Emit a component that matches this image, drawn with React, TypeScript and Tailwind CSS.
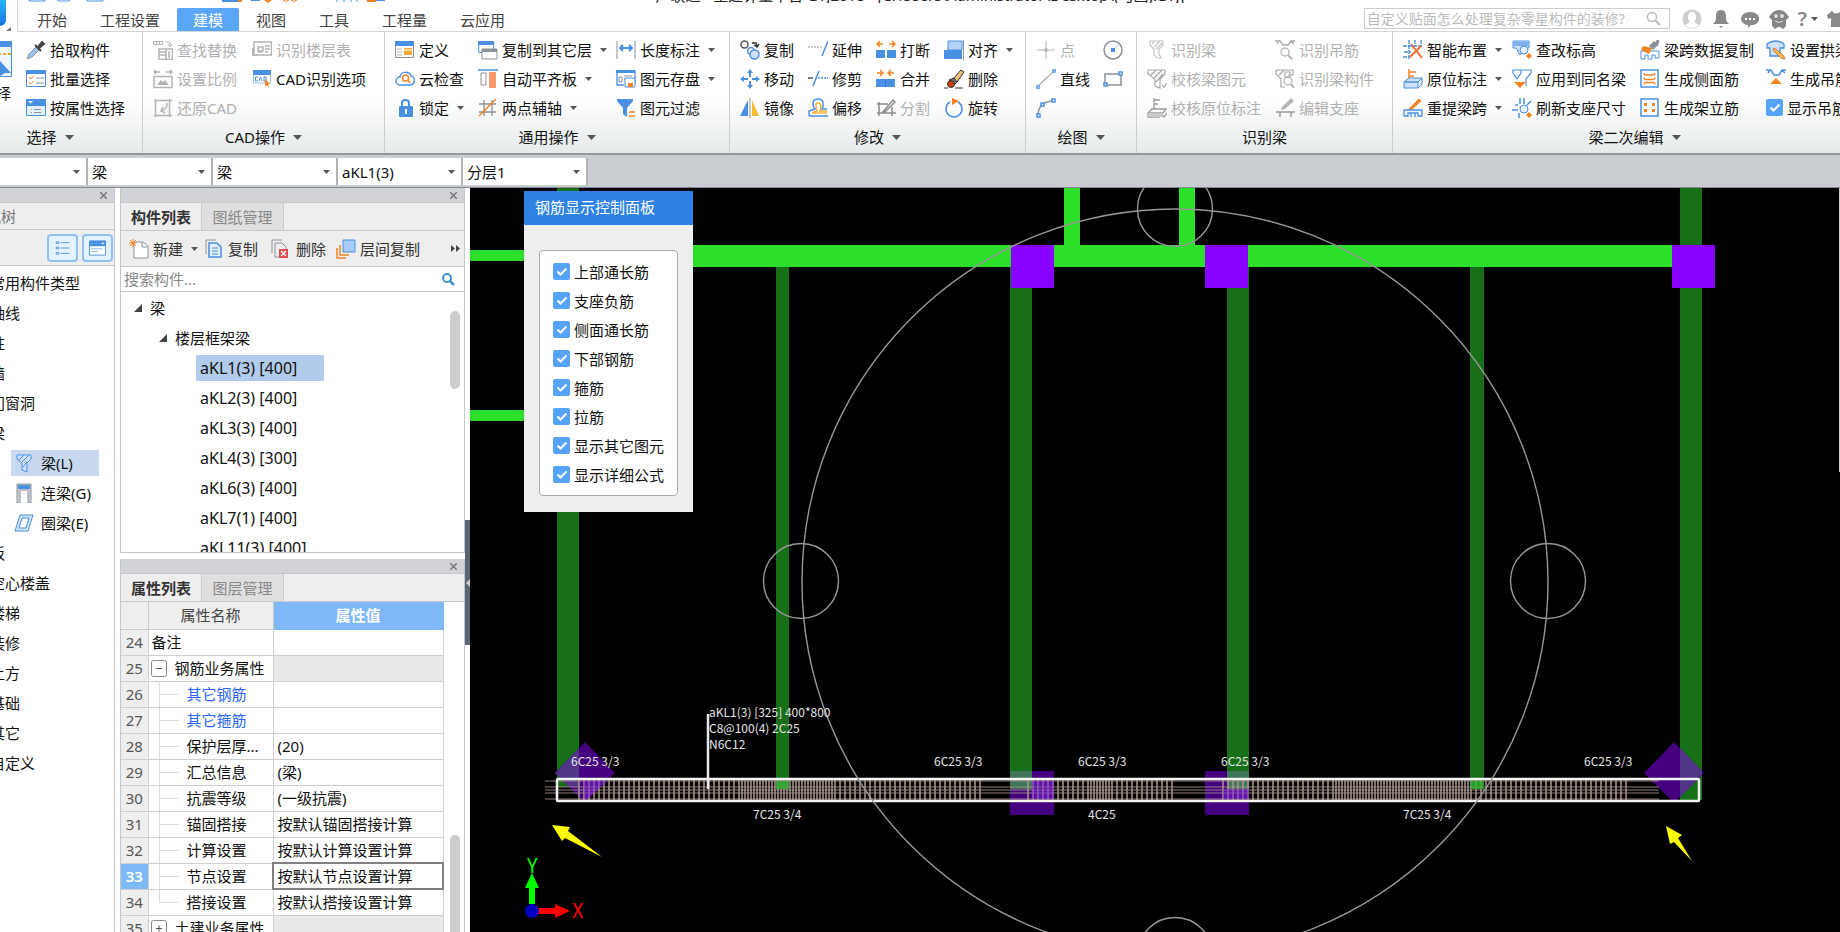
import { useState } from "react";
import type { ReactNode } from "react";
import clsx from "clsx";

const B = "#4a90e2";
const L = "#cfe2fa";
const O = "#f58220";
const G = "#8b9299";
const D = "#b4b4b4";

// 20x20 ribbon and toolbar glyphs
const ICONS: Record<string, ReactNode> = {
  pick: (
    <>
      <path d="M1 19l2-5 7-7 3 3-7 7z" fill="#9cc4ea" stroke={G} />
      <path d="M9 5l6 6M12 7l4-5 2 2-5 4z" stroke="#444" strokeWidth="2" fill="#555" />
    </>
  ),
  batch: (
    <>
      <path d="M.5 2.500h19v15h-19z" fill="#fff" stroke={B} />
      <path d="M0 1h20v4H0z" fill={B} />
      <path d="M3 8l1.500 2L8 7M3 13l1.500 2L8 12" stroke={O} />
      <path d="M10 9h8M10 14h8" stroke={G} />
    </>
  ),
  attr: (
    <>
      <path d="M.5 2.500h19v15h-19z" fill="#e3effc" stroke={B} />
      <path d="M0 1h20v7H0z" fill={B} />
      <path d="M2 3h5L4.500 5.500z" fill="#fff" />
      <path d="M5 11.500h1M8 11.500h7M5 14.500h1M8 14.500h7" stroke={G} />
    </>
  ),
  findReplace: (
    <>
      <path d="M.5 1.500h9v3h-9zM3.500 1v3M6.500 1v3M12 2h5v3M15 4l2 3 2-3" stroke={D} />
      <path d="M6 9h13.500v10.500H6zM6 12h7M6 15h7M13 9v10M16 11v7" stroke={D} strokeWidth="1.500" />
    </>
  ),
  ratio: (
    <>
      <path d="M1 3h6M3 1L1 3l2 2M13 3h6M17 1l2 2-2 2M1 7.500h18v11H1z" stroke={D} strokeWidth="1.500" />
      <path d="M4 16l4-5 2 2 2-2 4 5z" fill={D} />
    </>
  ),
  restore: (
    <path d="M1 2.500h18M2.500 1v18M1 17.500h18M16.500 1v18M14 5v2c0 3-2 4-5 6M10 9l-2 4 4 2" stroke={D} strokeWidth="1.500" />
  ),
  floorTable: (
    <>
      <path d="M2 2h17.500v13H2zM6 7h5v4H6zM13 6h5M13 9h5M13 12h3M6 12h4" stroke={D} strokeWidth="1.500" />
      <path d="M1 8v7h4" stroke={D} strokeWidth="2" />
    </>
  ),
  cadOption: (
    <>
      <path d="M1.500 2h17v12h-17z" fill="#fff" stroke="#9cc4ea" />
      <path d="M1 1h18v5H1z" fill={B} />
      <path d="M6 8H3.500v4H6M7 12l1.500-4L10 12M12 8v4h2V8z" stroke={B} />
      <path d="M13 10l5 5-2 .5 1 3-2-2-2 1z" fill={O} />
    </>
  ),
  define: (
    <>
      <path d="M.5 1.500h18v16H.5z" fill="#fff" stroke={G} />
      <path d="M0 1h19v5H0z" fill={B} />
      <path d="M9 8h8v7H9z" fill="#f7a833" />
      <path d="M9 10h8" stroke="#fff" />
      <path d="M2 9h5M2 12h5M2 15h5" stroke={D} />
    </>
  ),
  cloud: (
    <>
      <path d="M5 16a4 4 0 0 1 0-8c1-6 9-6 11-1 5 1 4 8 0 9z" stroke={B} strokeWidth="1.500" fill="#fff" />
      <circle cx="10.500" cy="9" r="3" stroke={O} strokeWidth="1.500" />
      <path d="M13 11l2 3" stroke={O} strokeWidth="1.500" />
    </>
  ),
  lock: (
    <>
      <path d="M7 8V5c0-4 7-4 7 0v3" stroke={B} strokeWidth="2" />
      <rect x="4" y="8" width="14" height="11" rx="1" fill={B} />
      <path d="M11 11v5" stroke="#fff" strokeWidth="2" />
    </>
  ),
  copyFloor: (
    <>
      <path d="M.7 1.500h15v11h-15z" stroke={B} fill="#fff" />
      <path d="M0 1h16v4H0z" fill={B} />
      <path d="M4 9h15v10H4z" stroke={G} fill="#fff" />
      <path d="M4 9h15v3H4z" fill={G} />
    </>
  ),
  alignSlab: (
    <>
      <path d="M0 1h20" stroke={B} strokeWidth="1.500" />
      <path d="M3 4h5v12H3z" stroke={G} fill="#fff" />
      <path d="M11 3h7v16h-7z" fill="#fb9b6e" />
    </>
  ),
  twoPoint: (
    <>
      <path d="M6 2v16M14 2v16M1 6h17M1 14h17" stroke={G} strokeWidth="1.300" />
      <path d="M1 18L18 1" stroke={O} strokeWidth="1.500" />
    </>
  ),
  lengthDim: (
    <>
      <path d="M1 1v18M19 1v18" stroke={G} />
      <path d="M4 8h12M7 5L4 8l3 3M13 5l3 3-3 3" stroke={B} strokeWidth="2" />
    </>
  ),
  saveEl: (
    <>
      <path d="M1 2h18v12M1 2v14h7" stroke={B} strokeWidth="1.300" />
      <path d="M0 1h19v3H0z" fill={B} />
      <path d="M3 8h3v5H3zM8 7h8M8 10h2" stroke={G} />
      <path d="M9 9h10v9H9z" stroke={B} fill="#fff" />
      <path d="M12 14h5v4h-5z" fill={O} />
    </>
  ),
  filter: (
    <>
      <path d="M1 1h16v2l-6 7v9l-4-3v-6L1 3z" fill={B} />
      <path d="M13 14h6M13 18h6" stroke={O} strokeWidth="1.500" />
    </>
  ),
  copy: (
    <>
      <circle cx="4.500" cy="4.500" r="3.500" stroke="#555" strokeWidth="1.500" />
      <path d="M12 3h4l1 4M14 5l3 2 2-3" stroke="#333" strokeWidth="1.500" />
      <circle cx="11" cy="11" r="3.500" stroke={B} strokeWidth="1.500" />
      <circle cx="14.500" cy="14.500" r="4.500" stroke={B} fill={L} strokeWidth="1.500" />
    </>
  ),
  move: (
    <path
      d="M10 0l3 4h-2v4H9V4H7zM10 20l-3-4h2v-4h2v4h2zM0 10l4-3v2h4v2H4v2zM20 10l-4 3v-2h-4V9h4V7z"
      fill={B}
    />
  ),
  mirror: (
    <>
      <path d="M8 2v16H0z" fill={B} />
      <path d="M12 2v16h7z" fill="#f9b934" />
      <path d="M10 0v20" stroke={G} />
    </>
  ),
  extend: (
    <>
      <path d="M0 7h14" stroke={G} strokeDasharray="2 1" />
      <path d="M20 1l-6 15" stroke={B} strokeWidth="1.500" />
    </>
  ),
  trim: (
    <>
      <path d="M0 9h5" stroke="#555" strokeWidth="1.500" />
      <path d="M11 2L5 17" stroke={B} strokeWidth="1.500" />
      <path d="M10 9h10" stroke={B} strokeDasharray="2 1" strokeWidth="1.500" />
    </>
  ),
  offset: (
    <>
      <path d="M1 18v-5l6-2c-3-4-3-10 3-10s6 6 4 10h5M1 18h19" fill="#fff" stroke={B} strokeWidth="1.500" />
      <path d="M4 15l5-2c-1-5-2-8 1-8 4 0 3 4 2 8h7M4 15h15" stroke="#f2b63d" strokeWidth="1.500" />
    </>
  ),
  breakEl: (
    <>
      <path d="M0 10h9v8H0zM11 10h9v8h-9z" fill={B} />
      <path d="M1 4h6M4 1L1 4l3 3M13 4h6M16 1l3 3-3 3" stroke={O} strokeWidth="1.500" />
    </>
  ),
  merge: (
    <>
      <path d="M0 10h19v8H0z" fill={B} />
      <path d="M9.500 10v8" stroke="#2f73c4" />
      <path d="M1 4h6M4 1l3 3-3 3M12 4h6M15 1l-3 3 3 3" stroke={O} strokeWidth="1.500" />
    </>
  ),
  split: (
    <path d="M1 6h11M1 15h19M3 4v14M16 9v9M7 14l10-12 2 2L9 14z" stroke="#8c8c8c" strokeWidth="1.500" />
  ),
  align: (
    <>
      <path d="M4 1h14v9H4z" fill="#b5d2f7" stroke={B} />
      <path d="M0 10h18v9H0z" fill={B} />
      <path d="M19.500 0v20" stroke={G} />
    </>
  ),
  erase: (
    <>
      <path d="M9 10l8-9 3 2-7 10z" fill="#e8c27a" stroke="#333" />
      <path d="M5 11l5-2 3 4-3 3z" fill="#777" stroke="#333" />
      <circle cx="7" cy="15" r="3.500" fill="#c2410c" stroke="#333" />
      <path d="M0 19h4M11 19h8" stroke="#333" />
    </>
  ),
  rotate: (
    <>
      <path d="M6 4a8 8 0 1 0 8 0" stroke={B} strokeWidth="1.500" />
      <path d="M8 0l7 3-7 4z" fill={O} />
    </>
  ),
  point: (
    <>
      <path d="M10 1v18M1 10h18" stroke={D} />
      <circle cx="10" cy="10" r="2" fill={D} />
    </>
  ),
  line: (
    <>
      <path d="M2 17L18 2" stroke={D} strokeWidth="1.500" />
      <path d="M0 16h4v4H0zM16 0h4v4h-4z" fill="#7fb0ee" />
    </>
  ),
  arc: (
    <>
      <path d="M2 18C2 8 8 3 18 3" stroke={G} strokeWidth="1.500" />
      <path d="M1 16h3v3H1zM5 5h3v3H5zM16 1h3v3h-3z" fill="#fff" stroke={B} strokeWidth="1.500" />
    </>
  ),
  circle: (
    <>
      <circle cx="10" cy="10" r="9" stroke={G} strokeWidth="1.500" />
      <path d="M10 10l5-5" stroke="#9cc4ea" />
      <path d="M8 8h4v4H8z" fill={B} />
    </>
  ),
  rect: (
    <>
      <path d="M2 5h16v11H2z" stroke={G} strokeWidth="1.500" />
      <path d="M1 14h3v3H1zM16 3h3v3h-3z" fill="#fff" stroke={B} strokeWidth="1.500" />
    </>
  ),
  recBeam: (
    <path d="M3 1h13v4l-4 4v5l2 4h-4l-3-3V9L3 5zM5 4l3-3M7 7l6-6M9 9l6-6" stroke="#c4c4c4" strokeWidth="1.200" />
  ),
  checkBeam: (
    <path d="M1 1h17v4l-5 5v9l-5-2v-7L1 5zM4 6l5-5M7 9l8-8M9 13l7-8M15 16l2 2 3-4" stroke="#a8a8a8" strokeWidth="1.200" />
  ),
  checkNote: (
    <>
      <path d="M7 0v11M7 2h6M7 6h4M1 15l4-4h14l-3 4zM1 15v4h12M15 17l2 2 3-4" stroke="#9c9c9c" strokeWidth="1.300" />
      <path d="M1 15h14v4H1z" fill="#c9c9c9" />
    </>
  ),
  recHanger: (
    <>
      <path d="M0 1h5l3 4h5l3-4h4M4 1l-2 3M16 1l3 3" stroke="#a8a8a8" strokeWidth="1.300" />
      <circle cx="10" cy="12" r="4" stroke="#b4b4b4" strokeWidth="1.300" />
      <path d="M13 15l4 4" stroke="#b4b4b4" strokeWidth="2" />
    </>
  ),
  recPart: (
    <>
      <path d="M1 1h17v5h-5M1 1v4l5 5v8h4M4 6l5-5M10 3h5v5h-5z" stroke="#a8a8a8" strokeWidth="1.200" />
      <circle cx="13" cy="12" r="4" stroke="#b4b4b4" strokeWidth="1.300" />
      <path d="M16 15l3 4" stroke="#b4b4b4" strokeWidth="2" />
    </>
  ),
  editSupport: (
    <>
      <path d="M7 9l9-9 3 3-9 8-4 1z" fill={D} />
      <path d="M1 14h19M5 14v5M16 14v5" stroke="#9c9c9c" strokeWidth="1.500" />
    </>
  ),
  smart: (
    <>
      <path d="M6 0v19M12 0v6M18 0v7M0 6h19M1 12h7M0 17h6" stroke={B} strokeWidth="1.300" strokeDasharray="4 1" />
      <path d="M8 4l11 14M18 6L7 17" stroke="#ee6c2d" strokeWidth="2" />
    </>
  ),
  note: (
    <>
      <path d="M6 12V0M6 3h7M6 7h5" stroke={O} strokeWidth="1.500" />
      <path d="M1 13l5-4h13l-4 4zM1 13h14v6H1zM15 19l4-4V9" fill={L} stroke={B} />
    </>
  ),
  respan: (
    <>
      <path d="M7 10l9-9 2 2-9 8-3 1z" fill={O} stroke={O} />
      <path d="M1 12h18v6h-4v-3H5v3H1zM8 15v4M12 15v4" stroke={B} strokeWidth="1.300" />
    </>
  ),
  elevation: (
    <>
      <path d="M1 1h16v7H12L8 15l-4-7H1z" fill={L} stroke={B} />
      <path d="M1 2h16v4H1z" fill="#7fb0ee" />
      <circle cx="12" cy="10" r="4" fill="#e8f1fd" stroke={B} />
      <path d="M14 16l3-3 3 3-3 3z" fill={O} />
    </>
  ),
  applyName: (
    <>
      <path d="M1 1h8v3l-4 6L1 4zM9 1h10v3l-5 6v7" stroke={B} strokeWidth="1.200" fill="#fff" />
      <path d="M2 13h12l-6 6z" fill={O} />
    </>
  ),
  refresh: (
    <>
      <path d="M8 0v6M12 0v6M0 12h6M3 7h3M15 7l4-4M7 15v5" stroke={B} strokeWidth="1.500" />
      <circle cx="12" cy="11" r="4" fill="#e8f1fd" stroke={B} />
      <path d="M14 17l3-3 3 3-3 3z" fill={O} />
    </>
  ),
  spanCopy: (
    <>
      <path d="M1 11h18v7h-4v-3h-3v4H8v-4H5v4H1z" fill="#fff" stroke={B} />
      <path d="M3 6l9 2-3 6-8-4z" fill={O} />
      <path d="M10 7l4-4 3 1 1-4M12 9l5-5" stroke={G} strokeWidth="3" />
    </>
  ),
  sideBar: (
    <>
      <path d="M1 1h17v17H1z" stroke={B} strokeWidth="1.500" />
      <path d="M4 4q0 2 2 2h7q2 0 2-2M4 8.500q0 2 2 2h7q2 0 2-2M4 15.500q0-2 2-2h7q2 0 2 2" stroke={O} strokeWidth="1.300" />
    </>
  ),
  erectBar: (
    <>
      <path d="M1 1h17v17H1z" stroke={B} strokeWidth="1.500" />
      <path d="M4 5h3v3H4zM12 5h3v3h-3zM4 11h3v3H4zM12 11h3v3h-3z" fill={O} />
    </>
  ),
  archBeam: (
    <>
      <path d="M1 4c5-4 12-4 17 0v4h-4v8H4V8H1z" fill={L} stroke={B} strokeWidth="1.300" />
      <path d="M8 8l9 7 2 4-4-1-8-8z" fill="#f9b87b" stroke="#d97706" />
    </>
  ),
  hanger: (
    <>
      <path d="M0 1h5l3 5h5l3-5h4M4 1L2 4M16 1l3 3" stroke={B} strokeWidth="1.500" />
      <path d="M10 9l6 6H4z" fill={O} />
    </>
  ),
  newItem: (
    <>
      <path d="M5 3h9l5 4v12H5z" stroke={G} fill="#fff" />
      <path d="M13 3v5h5" stroke={G} />
      <path d="M4 0v8M0 4h8M1 1l6 6M7 1L1 7" stroke={O} />
    </>
  ),
  dup: (
    <>
      <path d="M2 15V1h10" stroke={G} />
      <path d="M5 4h8l4 4v10H5z" fill="#e3effc" stroke={B} strokeWidth="1.500" />
      <path d="M8 9h6M8 12h6M8 15h6" stroke={B} />
    </>
  ),
  del: (
    <>
      <path d="M2 14V1h10M5 18V4h7l4 4v3M5 18h4" stroke={G} />
      <path d="M9 10h9v9H9z" fill="#e0474c" />
      <path d="M11 12l5 5M16 12l-5 5" stroke="#fff" strokeWidth="1.500" />
    </>
  ),
  layerCopy: (
    <>
      <path d="M1 9v10h9M4 6v10h9" stroke={O} strokeWidth="1.500" />
      <path d="M7 1h12v12H7z" fill="#a8cdfb" stroke={B} />
    </>
  ),
  beamL: (
    <path d="M3 2h14v4l-4 4v9l-5-2v-7L3 6zM5 7l5-5M8 9l7-7M9 14l4-5" fill={L} stroke={B} />
  ),
  beamG: (
    <>
      <path d="M3 1h14v19h-3V7H6v13H3z" fill="#c9ccd1" stroke={G} />
      <path d="M4 2h12v4H4z" fill={B} />
    </>
  ),
  beamE: (
    <path d="M6 2h13l-5 16H1zM8 5h7l-3 10H5z" fill={L} fillRule="evenodd" stroke={B} />
  ),
};

function Icon({ name }: { name: string }) {
  return (
    <svg className="h-5 w-5 shrink-0" viewBox="0 0 20 20" fill="none" aria-hidden="true">
      {ICONS[name]}
    </svg>
  );
}

function Caret({ big = false }: { big?: boolean }) {
  return (
    <svg
      className={clsx("shrink-0", big ? "h-[5px] w-[9px]" : "h-1 w-[7px]")}
      viewBox="0 0 8 4"
      preserveAspectRatio="none"
      aria-hidden="true"
    >
      <path d="M0 0h8L4 4z" fill="#555" />
    </svg>
  );
}

interface Tool {
  icon: string;
  text: string;
  caret?: boolean;
  off?: boolean;
  check?: boolean;
}

interface Group {
  label: string;
  noCaret?: boolean;
  width: string;
  cols: { width: string; items: Tool[] }[];
}

const t = (icon: string, text: string, caret = false, off = false): Tool => ({ icon, text, caret, off });

const GROUPS: Group[] = [
  {
    label: "CAD操作",
    width: "w-[242px]",
    cols: [
      {
        width: "w-[99px]",
        items: [
          t("findReplace", "查找替换", false, true),
          t("ratio", "设置比例", false, true),
          t("restore", "还原CAD", false, true),
        ],
      },
      {
        width: "w-32",
        items: [t("floorTable", "识别楼层表", false, true), t("cadOption", "CAD识别选项")],
      },
    ],
  },
  {
    label: "通用操作",
    width: "w-[345px]",
    cols: [
      { width: "w-[83px]", items: [t("define", "定义"), t("cloud", "云检查"), t("lock", "锁定", true)] },
      {
        width: "w-[138px]",
        items: [
          t("copyFloor", "复制到其它层", true),
          t("alignSlab", "自动平齐板", true),
          t("twoPoint", "两点辅轴", true),
        ],
      },
      {
        width: "w-28",
        items: [t("lengthDim", "长度标注", true), t("saveEl", "图元存盘", true), t("filter", "图元过滤")],
      },
    ],
  },
  {
    label: "修改",
    width: "w-[296px]",
    cols: [
      { width: "w-[68px]", items: [t("copy", "复制"), t("move", "移动"), t("mirror", "镜像")] },
      { width: "w-[68px]", items: [t("extend", "延伸"), t("trim", "修剪"), t("offset", "偏移")] },
      {
        width: "w-[68px]",
        items: [t("breakEl", "打断"), t("merge", "合并"), t("split", "分割", false, true)],
      },
      { width: "w-20", items: [t("align", "对齐", true), t("erase", "删除"), t("rotate", "旋转")] },
    ],
  },
  {
    label: "绘图",
    width: "w-[111px]",
    cols: [
      { width: "w-[67px]", items: [t("point", "点", false, true), t("line", "直线"), t("arc", "")] },
      { width: "w-6", items: [t("circle", ""), t("rect", "")] },
    ],
  },
  {
    label: "识别梁",
    noCaret: true,
    width: "w-[256px]",
    cols: [
      {
        width: "w-32",
        items: [
          t("recBeam", "识别梁", false, true),
          t("checkBeam", "校核梁图元", false, true),
          t("checkNote", "校核原位标注", false, true),
        ],
      },
      {
        width: "w-28",
        items: [
          t("recHanger", "识别吊筋", false, true),
          t("recPart", "识别梁构件", false, true),
          t("editSupport", "编辑支座", false, true),
        ],
      },
    ],
  },
  {
    label: "梁二次编辑",
    width: "w-[484px]",
    cols: [
      {
        width: "w-[109px]",
        items: [t("smart", "智能布置", true), t("note", "原位标注", true), t("respan", "重提梁跨", true)],
      },
      {
        width: "w-32",
        items: [t("elevation", "查改标高"), t("applyName", "应用到同名梁"), t("refresh", "刷新支座尺寸")],
      },
      {
        width: "w-[126px]",
        items: [t("spanCopy", "梁跨数据复制"), t("sideBar", "生成侧面筋"), t("erectBar", "生成架立筋")],
      },
      {
        width: "w-28",
        items: [
          t("archBeam", "设置拱梁"),
          t("hanger", "生成吊筋"),
          { icon: "", text: "显示吊筋", check: true },
        ],
      },
    ],
  },
];

function CheckBox({ label }: { label: string }) {
  const [on, setOn] = useState(true);
  return (
    <label className="flex h-[29px] items-center gap-1 whitespace-nowrap">
      <span className="relative h-[17px] w-[17px] shrink-0">
        <input
          type="checkbox"
          checked={on}
          onChange={() => setOn(!on)}
          className="peer block h-full w-full appearance-none rounded-xs border border-[#56a3fb] bg-white checked:bg-[#56a3fb]"
        />
        <svg
          className="pointer-events-none absolute inset-0 hidden h-full w-full peer-checked:block"
          viewBox="0 0 17 17"
          fill="none"
          aria-hidden="true"
        >
          <path d="M4.500 8.500l3 3 6-6" stroke="#fff" strokeWidth="2" />
        </svg>
      </span>
      {label}
    </label>
  );
}

function ToolButton({ tool }: { tool: Tool }) {
  if (tool.check) return <CheckBox label={tool.text} />;
  return (
    <button
      type="button"
      disabled={tool.off}
      aria-label={tool.text || tool.icon}
      className="flex h-[29px] items-center gap-1 whitespace-nowrap disabled:text-[#b0b0b0]"
    >
      <Icon name={tool.icon} />
      <span>{tool.text}</span>
      {tool.caret && (
        <span className="pl-1">
          <Caret />
        </span>
      )}
    </button>
  );
}

function GroupLabel({ text, noCaret }: { text: string; noCaret?: boolean }) {
  return (
    <div className="flex h-[30px] items-center justify-center gap-2">
      {text}
      {!noCaret && <Caret big />}
    </div>
  );
}

const TABS = ["开始", "工程设置", "建模", "视图", "工具", "工程量", "云应用"];

function Header() {
  return (
    <header className="relative flex h-8 shrink-0 bg-white">
      {/* caption bar and quick access icons, scrolled off the top edge */}
      <div className="pointer-events-none absolute inset-x-0 top-0 h-[3px] overflow-hidden">
        <svg className="absolute left-0 top-0 h-[3px] w-[400px]" viewBox="0 0 400 3" fill="none" aria-hidden="true">
          <path d="M29 0v1h16V0M57 0l2 1h9l2-1M87 0v1h16V0M337 0v2M344 0v2M351 0v2M357 0v2" stroke={B} />
          <path d="M222 0h18v2h-18zM251 0h9v1h-9zM376 0h9v1h-9z" fill={B} />
          <path d="M264 0h8l-4 3zM238 0h4v2h-4zM367 0h9v2h-9z" fill={O} />
          <path d="M283 0q3 3 6 0M291 0q3 3 6 0" stroke={O} />
        </svg>
        <div className="flex h-[3px] items-end justify-center">
          <span className="h-4 whitespace-nowrap text-[15px] leading-4 text-[#222]">
            广联达 - 土建计量平台 GTJ2018 - [C:\Users\Administrator\Desktop\(勾画).GTJ]
          </span>
        </div>
      </div>
      <div className="flex w-[17px] shrink-0 flex-col items-end">
        <svg className="h-8 w-[17px]" viewBox="0 0 17 32" aria-hidden="true">
          <defs>
            <linearGradient id="logo" x1="0" y1="0" x2="0" y2="1">
              <stop offset="0" stopColor="#2ab4f5" />
              <stop offset="1" stopColor="#1673e6" />
            </linearGradient>
          </defs>
          <path d="M0 0h6v20q0 5-6 6z" fill="url(#logo)" />
          <path d="M11 27v4H6z" fill="#777" />
        </svg>
      </div>
      <div className="flex flex-1 items-end border-b border-l border-[#d5d5d5]">
        <nav className="flex gap-px pl-[3px]">
          {TABS.map((tab) => (
            <button
              key={tab}
              type="button"
              className={clsx(
                "h-[23px] rounded-t-xs px-4 leading-[22px]",
                tab === "建模" ? "bg-[#5aa6f8] text-white" : "text-[#444]",
              )}
            >
              {tab}
            </button>
          ))}
        </nav>
        <div className="ml-auto flex shrink-0 items-center gap-[9px] self-stretch pt-1.5">
          <label className="mr-[3px] flex h-[21px] w-[306px] items-center border border-[#ccc] px-0.5">
            <input
              aria-label="搜索"
              placeholder="自定义贴面怎么处理复杂零星构件的装修?"
              className="min-w-0 flex-1 text-sm leading-4 outline-none placeholder:text-[#bbb]"
            />
            <svg className="mr-1.5 h-[15px] w-[15px]" viewBox="0 0 15 15" fill="none" stroke="#bbb" aria-hidden="true">
              <circle cx="6" cy="6" r="4.500" strokeWidth="1.500" />
              <path d="M9.500 9.500L14 14" strokeWidth="2" />
            </svg>
          </label>
          <svg className="h-5 w-5" viewBox="0 0 20 20" aria-hidden="true">
            <circle cx="10" cy="10" r="9.500" fill="#ccc" />
            <path d="M10 3c5 0 5 8 2 10l5 3c-4 4-10 4-14 0l5-3c-3-2-3-10 2-10z" fill="#fff" />
          </svg>
          <svg className="h-5 w-5" viewBox="0 0 20 20" fill="#8a8a8a" aria-hidden="true">
            <path d="M10 1c4 0 5 3 5 6 0 5 1 6 3 8H2c2-2 3-3 3-8 0-3 1-6 5-6zM8 17h4l-2 2z" />
          </svg>
          <svg className="h-5 w-5" viewBox="0 0 20 20" aria-hidden="true">
            <path d="M10 3c12 0 12 13 1 13l-3 3v-3C-2 15-1 3 10 3z" fill="#8a8a8a" />
            <path d="M5 9h2v2H5zM9 9h2v2H9zM13 9h2v2h-2z" fill="#fff" />
          </svg>
          <svg className="h-5 w-5" viewBox="0 0 20 20" aria-hidden="true">
            <path d="M3 4c4-4 10-4 14 0l3 4-3 3v6l-3 3-3-2H9l-3 2-3-3v-6L0 8z" fill="#858585" />
            <circle cx="7" cy="7" r="2" fill="#ddd" />
            <circle cx="13" cy="7" r="2" fill="#ddd" />
            <path d="M6 12q4 3 8 0" stroke="#ddd" fill="none" />
          </svg>
          <button type="button" className="flex items-center gap-1 text-xl font-semibold leading-5 text-[#888]">
            ?<Caret />
          </button>
          <svg className="h-5 w-[13px]" viewBox="0 0 13 20" aria-hidden="true">
            <path d="M0 6l5-4c2 3 5 3 8 1v15H4V9L1 10z" fill="#8a8a8a" />
          </svg>
        </div>
      </div>
    </header>
  );
}

function Ribbon() {
  return (
    <div className="flex h-[123px] shrink-0 overflow-hidden border-b-2 border-[#92969b] bg-linear-to-b from-white from-55% to-[#e6eaeb]">
      {/* first group runs past the left edge of the window */}
      <div className="-ml-[42px] w-[185px] shrink-0 border-r border-[#cbcdcf] pt-[3px]">
        <div className="flex">
          <button type="button" className="flex w-[68px] flex-col items-end gap-1 pr-[13px]">
            <svg className="mt-1.5 h-[38px] w-[34px]" viewBox="0 0 34 38" aria-hidden="true">
              <path d="M.5.5h32v35H.5z" fill="#eef5fd" stroke={B} />
              <path d="M0 0h33v6H0z" fill={B} />
              <path d="M4 13h28" stroke="#f2a33a" strokeWidth="2" strokeDasharray="3 2" />
              <path d="M21 20l11 12h-6l-5 3z" fill={B} />
            </svg>
            <span className="pr-0.5">选择</span>
          </button>
          <div>
            <ToolButton tool={t("pick", "拾取构件")} />
            <ToolButton tool={t("batch", "批量选择")} />
            <ToolButton tool={t("attr", "按属性选择")} />
          </div>
        </div>
        <GroupLabel text="选择" />
      </div>
      {GROUPS.map((g) => (
        <section key={g.label} className={clsx("shrink-0 border-r border-[#cbcdcf] pt-[3px]", g.width)}>
          <div className="flex h-[87px] pl-[10px]">
            {g.cols.map((col) => (
              <div key={col.items[0].icon} className={clsx("shrink-0", col.width)}>
                {col.items.map((item) => (
                  <ToolButton key={item.icon + item.text} tool={item} />
                ))}
              </div>
            ))}
          </div>
          <GroupLabel text={g.label} noCaret={g.noCaret} />
        </section>
      ))}
    </div>
  );
}

const COMBOS = [
  { name: "楼层", value: "", width: "w-[88px]" },
  { name: "构件大类", value: "梁", width: "w-[125px]" },
  { name: "构件类型", value: "梁", width: "w-[125px]" },
  { name: "构件", value: "aKL1(3)", width: "w-[125px]" },
  { name: "分层", value: "分层1", width: "w-[125px]" },
];

function ComboBar() {
  return (
    <div className="flex h-[33px] shrink-0 border-b border-[#85898e] bg-[#c9ccd1] pt-[3px]">
      {COMBOS.map((c) => (
        <div key={c.name} className={clsx("relative h-[27px] border-r-2 border-[#b2b2b2] bg-white", c.width)}>
          <select
            aria-label={c.name}
            defaultValue={c.value}
            className="h-full w-full appearance-none pl-1 outline-none"
          >
            <option>{c.value}</option>
          </select>
          <span className="pointer-events-none absolute inset-y-0 right-1.5 flex items-center">
            <Caret />
          </span>
        </div>
      ))}
    </div>
  );
}

function PanelCaption() {
  return (
    <div className="flex h-[15px] shrink-0 items-center justify-end border-b border-[#c6c8cb] bg-[#d1d3d9] pr-[7px]">
      <button type="button" aria-label="关闭" className="flex">
        <svg className="h-[7px] w-[7px]" viewBox="0 0 7 7" stroke="#777" strokeWidth="1.500" aria-hidden="true">
          <path d="M0 0l7 7M7 0L0 7" />
        </svg>
      </button>
    </div>
  );
}

const NAV = [
  "常用构件类型",
  "轴线",
  "柱",
  "墙",
  "门窗洞",
  "梁",
  "beamL|梁(L)",
  "beamG|连梁(G)",
  "beamE|圈梁(E)",
  "板",
  "空心楼盖",
  "楼梯",
  "装修",
  "土方",
  "基础",
  "其它",
  "自定义",
];

function Navigator() {
  return (
    <aside className="flex w-[115px] shrink-0 flex-col overflow-hidden border-r border-[#c3c6ca]">
      <PanelCaption />
      <div className="h-[27px] shrink-0 border-b border-[#c6c8cb] bg-[#eee] leading-[26px] text-[#777]">
        <span className="-ml-[29px]">导航树</span>
      </div>
      <div className="flex h-9 shrink-0 items-center justify-end gap-1 border-b border-[#c6c8cb] bg-[#eee] pr-px">
        <button type="button" aria-label="列表" className="h-7 w-[31px] rounded border-2 border-[#8dc0fa] bg-[#e4f1ff] p-1">
          <svg className="h-full w-full" viewBox="0 0 20 18" fill="none" stroke={B} aria-hidden="true">
            <path d="M3 2h3v2H3zM3 8h3v2H3zM3 14h3v2H3zM8 3h10M8 9h10M8 15h10" />
          </svg>
        </button>
        <button type="button" aria-label="面板" className="h-7 w-[31px] rounded border-2 border-[#8dc0fa] bg-[#e4f1ff] p-1">
          <svg className="h-full w-full" viewBox="0 0 20 18" fill="none" aria-hidden="true">
            <path d="M1 1h18v16H1z" fill="#fff" stroke={B} />
            <path d="M1 1h18v6H1z" fill={B} />
            <path d="M3 4h2M7 4h2M11 4h2M3 10h12M3 13h8" stroke="#7fb0ee" />
            <path d="M14 3h4l-2 2z" fill="#fff" />
          </svg>
        </button>
      </div>
      <ul className="pt-0.5">
        {NAV.map((n) => {
          const [icon, text] = n.includes("|") ? n.split("|") : ["", n];
          return (
            <li key={n} className="flex h-[30px] items-center">
              {icon ? (
                <button
                  type="button"
                  className={clsx(
                    "ml-[11px] flex h-[26px] w-[88px] items-center gap-[7px] whitespace-nowrap pl-[3px]",
                    icon === "beamL" && "bg-[#c8d8ef]",
                  )}
                >
                  <Icon name={icon} />
                  <span>{text}</span>
                </button>
              ) : (
                <button type="button" className="-ml-[10px] whitespace-nowrap">
                  {text}
                </button>
              )}
            </li>
          );
        })}
      </ul>
    </aside>
  );
}

function PanelTabs({ tabs }: { tabs: [string, string] }) {
  return (
    <div className="flex h-7 shrink-0 border-b border-[#c6c8cb] bg-[#eee]">
      <button type="button" className="w-[81px] border-r border-[#ccc] font-bold text-[#333]">
        {tabs[0]}
      </button>
      <button type="button" className="w-[82px] border-r border-[#ccc] bg-[#dfdfdf] text-[#888]">
        {tabs[1]}
      </button>
    </div>
  );
}

const BEAMS = [
  "aKL1(3) [400]",
  "aKL2(3) [400]",
  "aKL3(3) [400]",
  "aKL4(3) [300]",
  "aKL6(3) [400]",
  "aKL7(1) [400]",
  "aKL11(3) [400]",
];

function TreeArrow() {
  return (
    <svg className="mr-2 h-2 w-2" viewBox="0 0 8 8" aria-hidden="true">
      <path d="M8 0v8H0z" fill="#444" />
    </svg>
  );
}

function ComponentPanel() {
  return (
    <section className="flex h-[365px] shrink-0 flex-col border border-t-0 border-[#c3c6ca]">
      <PanelCaption />
      <PanelTabs tabs={["构件列表", "图纸管理"]} />
      <div className="flex h-9 shrink-0 items-center border-b border-[#c6c8cb] bg-[#eee] pl-2 text-[#333]">
        <button type="button" className="mr-1.5 flex items-center gap-1">
          <Icon name="newItem" />
          新建
          <span className="pl-1">
            <Caret />
          </span>
        </button>
        <button type="button" className="mr-3 flex items-center gap-1">
          <Icon name="dup" />
          复制
        </button>
        <button type="button" className="mr-[10px] flex items-center gap-1.5">
          <Icon name="del" />
          删除
        </button>
        <button type="button" className="flex items-center gap-1">
          <Icon name="layerCopy" />
          层间复制
        </button>
        <svg className="ml-auto mr-1 h-[7px] w-[9px]" viewBox="0 0 9 7" aria-hidden="true">
          <path d="M0 0l4 3.500L0 7zM5 0l4 3.500L5 7z" fill="#444" />
        </svg>
      </div>
      <label className="flex h-[25px] shrink-0 items-center border-b border-[#c6c8cb] pl-[3px] pr-[9px]">
        <input
          aria-label="搜索构件"
          placeholder="搜索构件..."
          className="min-w-0 flex-1 outline-none placeholder:text-[#888]"
        />
        <svg className="h-[14px] w-[14px]" viewBox="0 0 14 14" fill="none" stroke="#3f92cf" aria-hidden="true">
          <circle cx="6" cy="6" r="4" strokeWidth="2" />
          <path d="M9 9l4 4" strokeWidth="2.500" />
        </svg>
      </label>
      <div className="relative min-h-0 flex-1 overflow-hidden pt-px">
        <div className="flex h-[30px] items-center pl-[13px]">
          <TreeArrow />梁
        </div>
        <div className="flex h-[30px] items-center pl-[38px]">
          <TreeArrow />
          楼层框架梁
        </div>
        {BEAMS.map((b, i) => (
          <div key={b} className="flex h-[30px] items-center pl-[75px]">
            <button
              type="button"
              className={clsx("h-[26px] w-32 whitespace-nowrap pl-1 text-left text-base", i === 0 && "bg-[#b1cbec]")}
            >
              {b}
            </button>
          </div>
        ))}
        <div className="absolute right-1 top-[19px] h-[78px] w-[10px] rounded-full bg-[#cdcdcd]" />
      </div>
    </section>
  );
}

const PROPS: [number, string, string, string?][] = [
  [24, "备注", ""],
  [25, "钢筋业务属性", "", "minus"],
  [26, "其它钢筋", "", "blue"],
  [27, "其它箍筋", "", "blue"],
  [28, "保护层厚...", "(20)", "sub"],
  [29, "汇总信息", "(梁)", "sub"],
  [30, "抗震等级", "(一级抗震)", "sub"],
  [31, "锚固搭接", "按默认锚固搭接计算", "sub"],
  [32, "计算设置", "按默认计算设置计算", "sub"],
  [33, "节点设置", "按默认节点设置计算", "sub"],
  [34, "搭接设置", "按默认搭接设置计算", "last"],
  [35, "土建业务属性", "", "plus"],
];

function PropertyPanel() {
  return (
    <section className="relative flex min-h-0 flex-1 flex-col overflow-hidden border-x border-[#c3c6ca]">
      <PanelCaption />
      <PanelTabs tabs={["属性列表", "图层管理"]} />
      <table className="w-[322px] table-fixed border-collapse">
        <colgroup>
          <col className="w-[27px]" />
          <col className="w-[125px]" />
          <col className="w-[170px]" />
        </colgroup>
        <thead>
          <tr className="h-[27px] text-[#444]">
            <th className="border border-t-0 border-l-0 border-[#c9c9c9] bg-[#eee]" aria-label="行号" />
            <th className="border border-t-0 border-[#c9c9c9] bg-[#eee] font-normal">属性名称</th>
            <th className="border border-t-0 border-[#80b9f8] bg-[#80b9f8] font-semibold text-white">属性值</th>
          </tr>
        </thead>
        <tbody>
          {PROPS.map(([no, name, value, kind]) => {
            const head = kind === "minus" || kind === "plus";
            return (
              <tr key={no} className="h-[26px] leading-6">
                <td
                  className={clsx(
                    "border border-l-0 border-[#cfcfcf] p-0 text-center",
                    no === 33 ? "bg-[#80b9f8] font-semibold text-white" : "bg-[#eee] text-[#555]",
                  )}
                >
                  {no}
                </td>
                <td className="border border-[#cfcfcf] p-0">
                  <div className="flex h-[25px] items-center whitespace-nowrap">
                    {head && (
                      <svg className="ml-0.5 mr-2 h-[17px] w-4" viewBox="0 0 16 17" fill="none" aria-hidden="true">
                        <rect x=".5" y=".5" width="15" height="16" rx="2" fill="#fff" stroke="#888" />
                        <path d={kind === "minus" ? "M5 8.500h6" : "M5 8.500h6M8 5.500v6"} stroke="#555" />
                      </svg>
                    )}
                    {kind && !head && (
                      <svg className="ml-2.5 mr-2 h-[25px] w-5" viewBox="0 0 20 25" stroke="#dcdcdc" aria-hidden="true">
                        <path d={kind === "last" ? "M.5 0v12.500H20" : "M.5 0v25M0 12.500h20"} fill="none" />
                      </svg>
                    )}
                    <span className={clsx(!kind && "pl-[3px]", kind === "blue" && "text-[#2b66f6]")}>{name}</span>
                  </div>
                </td>
                <td
                  className={clsx(
                    "whitespace-nowrap border border-[#cfcfcf] py-0 pl-1 pr-0",
                    head && "bg-[#e9e9e9]",
                    no === 33 && "outline-2 -outline-offset-1 outline-[#808080]",
                  )}
                >
                  {value}
                </td>
              </tr>
            );
          })}
        </tbody>
      </table>
      <div className="absolute bottom-0 right-1 h-[97px] w-[10px] rounded-t-full bg-[#cdcdcd]" />
    </section>
  );
}

// stirrup positions for the three spans, denser around mid span
function stirrups() {
  const xs: number[] = [];
  const spans = [
    [579, 981, 735, 835],
    [1028, 1176, 1085, 1110],
    [1223, 1631, 1330, 1470],
  ];
  spans.forEach(([from, to, a, b]) => {
    let x = from;
    while (x < to) {
      xs.push(x);
      x += x > a && x < b ? 3 : 5;
    }
  });
  return xs;
}

const LABELS: [number, number, string][] = [
  [571, 766, "6C25 3/3"],
  [934, 766, "6C25 3/3"],
  [1078, 766, "6C25 3/3"],
  [1221, 766, "6C25 3/3"],
  [1584, 766, "6C25 3/3"],
  [753, 819, "7C25 3/4"],
  [1088, 819, "4C25"],
  [1403, 819, "7C25 3/4"],
  [709, 717, "aKL1(3) [325] 400*800"],
  [709, 733, "C8@100(4) 2C25"],
  [709, 749, "N6C12"],
];

function Drawing() {
  return (
    <svg
      className="absolute inset-0 h-full w-full"
      viewBox="470 188 1370 744"
      preserveAspectRatio="xMinYMin slice"
      fill="none"
    >
      <g fill="#176f17">
        <rect x="557" y="188" width="22" height="599" />
        <rect x="776" y="266" width="13" height="523" />
        <rect x="1010" y="266" width="22" height="523" />
        <rect x="1227" y="266" width="22" height="523" />
        <rect x="1470" y="266" width="14" height="523" />
        <rect x="1680" y="188" width="22" height="612" />
      </g>
      <g fill="#2bdf2b">
        <rect x="470" y="250" width="60" height="11" />
        <rect x="470" y="410" width="60" height="11" />
        <rect x="690" y="245" width="985" height="22" />
        <rect x="1064" y="188" width="16" height="58" />
        <rect x="1179" y="188" width="16" height="58" />
      </g>
      <g fill="#8800ff">
        <rect x="1011" y="245" width="43" height="43" />
        <rect x="1205" y="245" width="43" height="43" />
        <rect x="1672" y="245" width="43" height="43" />
      </g>
      <g fill="#45007f">
        <path d="M1010 771h44v44h-44zM1205 771h44v44h-44z" />
        <path d="M585 742l30 31-30 30-30-30z" />
        <path d="M1674 742l30 31-30 30-30-30z" />
      </g>
      <g fill="#3f7559">
        <path d="M1010 771h22v18h-22zM1227 771h22v18h-22z" />
      </g>
      <path d="M579 748v39h-10l-14-14zM1680 748l22 23v4l-22 22z" fill="#503589" />
      <g stroke="#a8958d">
        <path d="M545 781h1114M545 787h1114M545 790h1114M545 793h1114M545 799h1114" strokeOpacity="0.85" />
        {stirrups().map((x) => (
          <path key={x} d={`M${x} 780v20`} strokeOpacity="0.9" strokeWidth="1.700" />
        ))}
      </g>
      <path d="M776 781h13v8h-13zM1470 781h14v8h-14z" fill="#2fae2f" fillOpacity="0.75" />
      <path d="M1032 781h22v18h-22zM1223 789h26v10h-26zM583 781h24l-22 20z" fill="#7c22d6" fillOpacity="0.5" />
      <rect x="557" y="779" width="1142" height="22" rx="1" stroke="#f4f4f4" strokeWidth="2.500" />
      <path d="M708 714v75" stroke="#e8e8e8" strokeWidth="2.500" />
      <g stroke="#989898" strokeWidth="1.400">
        <circle cx="1175" cy="582" r="373" />
        <circle cx="1175" cy="209" r="37.500" />
        <circle cx="1175" cy="955" r="37.500" />
        <circle cx="801" cy="581" r="37.500" />
        <circle cx="1548" cy="581" r="37.500" />
      </g>
      <g fill="#e6e6e6" fontSize="12" fontFamily="'Noto Sans CJK SC', sans-serif">
        {LABELS.map(([x, y, s]) => (
          <text key={`${x}-${y}`} x={x} y={y}>
            {s}
          </text>
        ))}
      </g>
      <g fill="#ff0">
        <path d="M552 825l18 2-2 4 34 26-37-19-3 3z" />
        <path d="M1666 826l16 9-4 3 14 23-18-19-4 2z" />
      </g>
      <path d="M532 904v-17" stroke="#0f0" strokeWidth="6" />
      <path d="M532 873l7 15h-14z" fill="#0f0" />
      <path d="M538 911h18" stroke="red" strokeWidth="6" />
      <path d="M570 911l-15 7v-14z" fill="red" />
      <circle cx="532" cy="911" r="7" fill="#0000c0" />
      <g fontSize="20" fontFamily="'Noto Sans CJK SC', sans-serif">
        <text x="527" y="873" fill="#0f0">
          Y
        </text>
        <text x="572" y="918" fill="red">
          X
        </text>
      </g>
      <path d="M1839.500 188v284" stroke="#ccc" />
    </svg>
  );
}

const REBAR = ["上部通长筋", "支座负筋", "侧面通长筋", "下部钢筋", "箍筋", "拉筋", "显示其它图元", "显示详细公式"];

function RebarDialog() {
  return (
    <div role="dialog" aria-label="钢筋显示控制面板" className="absolute left-[54px] top-[3px] w-[169px] bg-[#efefef]">
      <h2 className="h-[34px] bg-[#2e82e4] pl-[11px] leading-[33px] text-white">钢筋显示控制面板</h2>
      <div className="mx-[15px] mb-4 mt-[25px] rounded border border-[#aaa] bg-white pb-1.5 pl-[13px] pt-[6px]">
        {REBAR.map((r) => (
          <CheckBox key={r} label={r} />
        ))}
      </div>
    </div>
  );
}

export default function App() {
  return (
    <div className="flex h-screen flex-col overflow-hidden bg-white font-['Noto_Sans','Noto_Sans_CJK_SC',sans-serif] text-[15px] leading-5 text-[#111]">
      <Header />
      <Ribbon />
      <ComboBar />
      <main className="flex min-h-0 flex-1">
        <Navigator />
        <div className="ml-[5px] flex w-[345px] shrink-0 flex-col gap-1.5">
          <ComponentPanel />
          <PropertyPanel />
        </div>
        <div className="flex w-[5px] shrink-0 flex-col">
          <button
            type="button"
            aria-label="收起"
            className="mt-[332px] flex h-[125px] w-full items-center justify-center bg-[#5b6673]"
          >
            <svg className="h-2 w-1" viewBox="0 0 4 8" aria-hidden="true">
              <path d="M4 0v8L0 4z" fill="#ccc" />
            </svg>
          </button>
        </div>
        <div className="relative min-w-0 flex-1 overflow-hidden bg-black">
          <Drawing />
          <RebarDialog />
        </div>
      </main>
    </div>
  );
}
